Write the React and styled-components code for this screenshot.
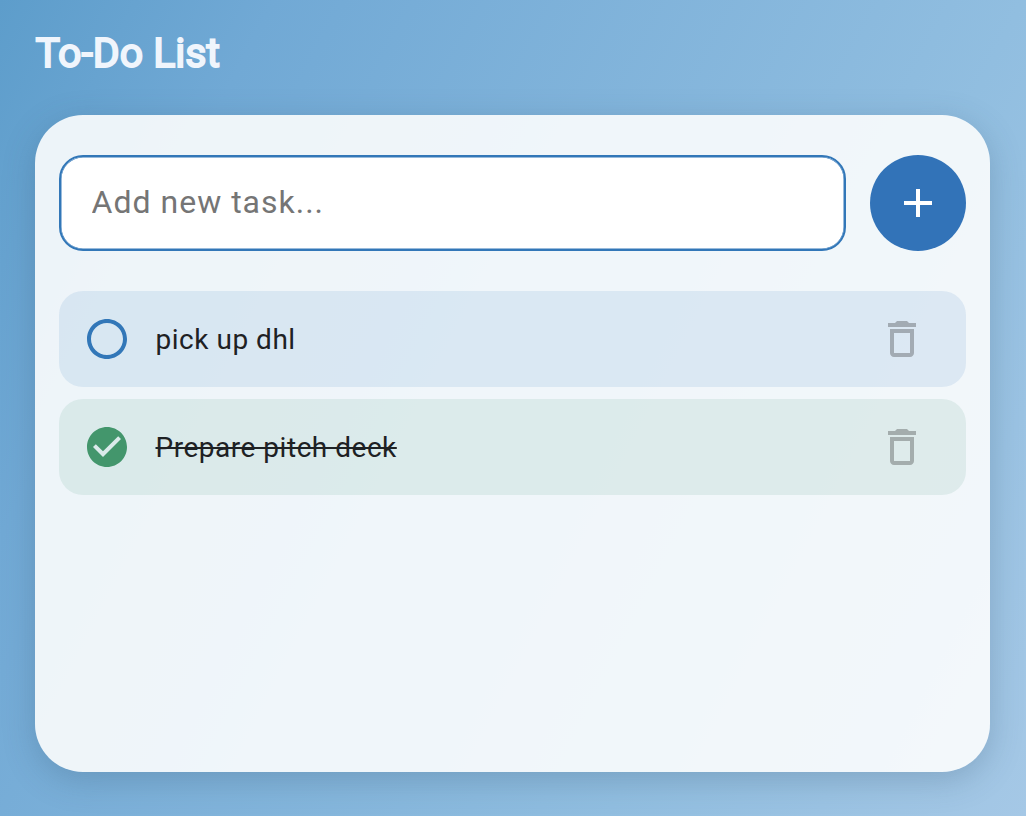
import React, { useState } from "react";
import styled, { createGlobalStyle } from "styled-components";
import {
  MdAdd,
  MdCheckCircle,
  MdDeleteOutline,
  MdRadioButtonUnchecked,
} from "react-icons/md";

const GlobalStyle = createGlobalStyle`
  *, *::before, *::after { box-sizing: border-box; }
  body {
    margin: 0;
    font-family: Roboto, "Liberation Sans", sans-serif;
  }
  button, input { font-family: inherit; }
`;

const Page = styled.main`
  display: flex;
  flex-direction: column;
  height: 816px;
  padding: 29px 36px 44px 35px;
  overflow: hidden;
  background: linear-gradient(117deg, #5d9dcb 0%, #71a9d5 19%, #91bee0 71%, #a5c8e6 100%);
`;

const Title = styled.h1`
  margin: 0 0 37px;
  padding-left: 0.6px;
  color: #f0f5fc;
  font-size: 41px;
  line-height: 49px;
  font-weight: 400;
  letter-spacing: 0;
  -webkit-text-stroke: 2px #f0f5fc;
`;

const Card = styled.section`
  display: flex;
  flex: 1;
  flex-direction: column;
  gap: 40px;
  padding: 40px 24px;
  border-radius: 48px;
  background: rgba(252, 253, 253, 0.9);
  box-shadow: 0 8px 32px rgba(50, 80, 110, 0.26);
`;

const Form = styled.form`
  display: flex;
  gap: 24px;
`;

const TaskInput = styled.input`
  flex: 1;
  min-width: 0;
  height: 96px;
  padding: 0 30.6px 2px;
  border: 2px solid #3277b8;
  border-radius: 24px;
  outline: none;
  background: #fff;
  box-shadow: inset 0 0 0 0.5px #3277b8;
  color: #202124;
  font-size: 32px;
  letter-spacing: 1px;

  &::placeholder { color: #757575; opacity: 1; }
`;

const AddButton = styled.button`
  display: grid;
  place-items: center;
  width: 96px;
  height: 96px;
  padding: 0;
  border: 0;
  border-radius: 50%;
  background: #3273b8;
  color: #fff;
`;

const TaskList = styled.ul`
  display: flex;
  flex-direction: column;
  gap: 12px;
  margin: 0;
  padding: 0;
  list-style: none;
`;

const TaskRow = styled.li`
  display: flex;
  align-items: center;
  height: 96px;
  padding: 0 40px 0 24px;
  border-radius: 24px;
  background: ${({ $done }) =>
    $done ? "rgba(67, 150, 115, 0.11)" : "rgba(50, 120, 195, 0.11)"};
`;

const IconButton = styled.button`
  display: flex;
  padding: 0;
  border: 0;
  background: none;
  color: ${({ $color }) => $color};
  opacity: ${({ $faded }) => ($faded ? 0.3 : 1)};
`;

const TaskText = styled.span`
  flex: 1;
  margin-left: 24.5px;
  padding-top: 2px;
  color: #1e2124;
  font-size: 28px;
  line-height: 42px;
  letter-spacing: 0.52px;
  text-decoration: ${({ $done }) => ($done ? "line-through 2px" : "none")};
`;

const initialTasks = [
  { id: 1, text: "pick up dhl", done: false },
  { id: 2, text: "Prepare pitch deck", done: true },
];

export default function App() {
  const [tasks, setTasks] = useState(initialTasks);
  const [draft, setDraft] = useState("");

  const addTask = (event) => {
    event.preventDefault();
    const text = draft.trim();
    if (!text) return;
    setTasks([...tasks, { id: Date.now(), text, done: false }]);
    setDraft("");
  };

  const toggle = (id) =>
    setTasks(tasks.map((t) => (t.id === id ? { ...t, done: !t.done } : t)));

  const remove = (id) => setTasks(tasks.filter((t) => t.id !== id));

  return (
    <>
      <GlobalStyle />
      <Page>
        <Title>To-Do List</Title>
        <Card>
          <Form onSubmit={addTask}>
            <TaskInput
              placeholder="Add new task..."
              value={draft}
              onChange={(e) => setDraft(e.target.value)}
            />
            <AddButton type="submit">
              <MdAdd size={48} />
            </AddButton>
          </Form>
          <TaskList>
            {tasks.map(({ id, text, done }) => (
              <TaskRow key={id} $done={done}>
                <IconButton $color={done ? "#43966c" : "#3277b8"} onClick={() => toggle(id)}>
                  {done ? <MdCheckCircle size={48} /> : <MdRadioButtonUnchecked size={48} />}
                </IconButton>
                <TaskText $done={done}>{text}</TaskText>
                <IconButton $color="#222" $faded onClick={() => remove(id)}>
                  <MdDeleteOutline size={48} />
                </IconButton>
              </TaskRow>
            ))}
          </TaskList>
        </Card>
      </Page>
    </>
  );
}
